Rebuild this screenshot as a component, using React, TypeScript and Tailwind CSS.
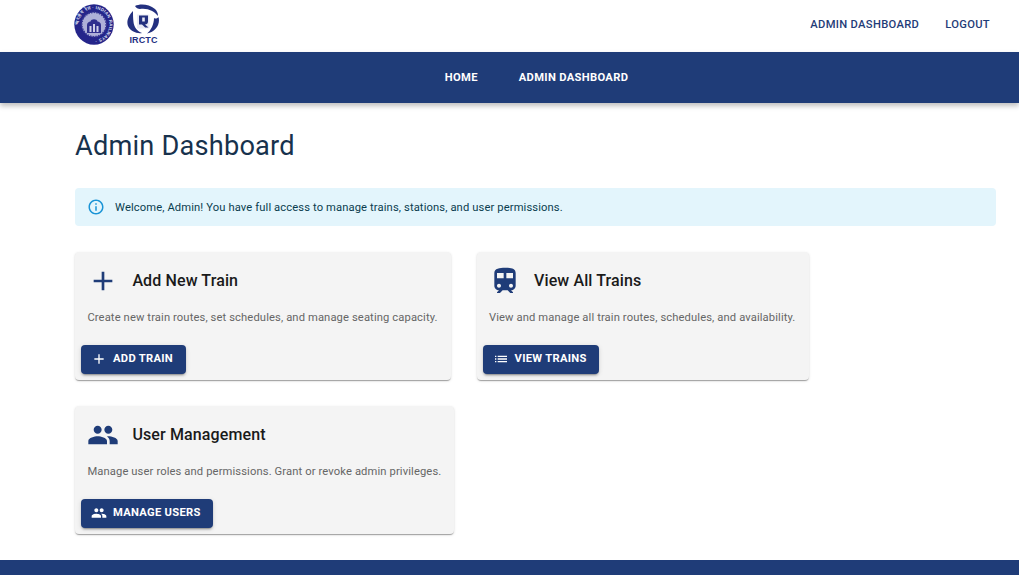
const NAVY = "#1f3c78";

function Icon({ d, className }: { d: string; className: string }) {
  return (
    <svg viewBox="0 0 24 24" fill="currentColor" className={className}>
      <path d={d} />
    </svg>
  );
}

const ADD = "M19 13h-6v6h-2v-6H5v-2h6V5h2v6h6v2z";
const TRAIN = "M12 2c-4 0-8 .5-8 4v9.5C4 17.43 5.57 19 7.5 19L6 20.5v.5h2.23l2-2H14l2 2h2v-.5L16.5 19c1.93 0 3.5-1.57 3.5-3.5V6c0-3.5-3.58-4-8-4zM7.5 17c-.83 0-1.5-.67-1.5-1.5S6.67 14 7.5 14s1.5.67 1.5 1.5S8.33 17 7.5 17zm3.5-7H6V6h5v4zm2 0V6h5v4h-5zm3.5 7c-.83 0-1.5-.67-1.5-1.5s.67-1.5 1.5-1.5 1.5.67 1.5 1.5-.67 1.5-1.5 1.5z";
const PEOPLE = "M16 11c1.66 0 2.99-1.34 2.99-3S17.66 5 16 5c-1.66 0-3 1.34-3 3s1.34 3 3 3zm-8 0c1.66 0 2.99-1.34 2.99-3S9.66 5 8 5C6.34 5 5 6.34 5 8s1.34 3 3 3zm0 2c-2.33 0-7 1.17-7 3.5V19h14v-2.5c0-2.33-4.67-3.5-7-3.5zm8 0c-.29 0-.62.02-.97.05 1.16.84 1.97 1.97 1.97 3.45V19h6v-2.5c0-2.33-4.67-3.5-7-3.5z";
const LIST = "M3 13h2v-2H3v2zm0 4h2v-2H3v2zm0-8h2V7H3v2zm4 4h14v-2H7v2zm0 4h14v-2H7v2zM7 7v2h14V7H7z";
const INFO = "M11 7h2v2h-2zm0 4h2v6h-2zm1-9C6.48 2 2 6.48 2 12s4.48 10 10 10 10-4.48 10-10S17.52 2 12 2zm0 18c-4.41 0-8-3.59-8-8s3.59-8 8-8 8 3.59 8 8-3.59 8-8 8z";

function Emblem() {
  return (
    <svg viewBox="0 0 40 41" className="w-[40px] h-[41px] shrink-0">
      <defs>
        <path id="ring" d="M4.5 20.5a15.5 15.5 0 1 1 31 0a15.5 15.5 0 1 1 -31 0" />
      </defs>
      <ellipse cx="20" cy="20.5" rx="19.7" ry="20.2" fill="#25258a" />
      <text fontSize="4.4" fontWeight="700" fill="#dfe0f2" fontFamily="'Liberation Sans',sans-serif" letterSpacing="0.25">
        <textPath href="#ring">भारतीय रेल · INDIAN RAILWAYS ·</textPath>
      </text>
      <circle cx="20" cy="20.5" r="12.2" fill="#aeb0d8" />
      <circle cx="20" cy="20.5" r="12.2" fill="none" stroke="#3a3a96" strokeWidth="1.6" strokeDasharray="1.5 1.2" />
      <path d="M13 29v-8c0-2 2-3.5 3.5-3.5C17 14.5 23 14.5 23.5 17.5c1.5 0 3.500 1.500 3.500 3.500v8z" fill="#30308e" />
      <path d="M15.500 28v-6h2v6zM19 28v-8h2v8zM22.500 28v-6h2v6z" fill="#cfd0e8" />
    </svg>
  );
}

function IrctcLogo() {
  return (
    <div className="flex flex-col items-center w-[33px] ml-[13px] shrink-0">
      <svg viewBox="0 0 33 31" className="w-[33px] h-[31px]">
        <path d="M8 2C13-.5 22 0 28 5c2 2 3 4 3 7-4-5-10-8-18-7-2 0-4-1-5-3z" fill="#23307f" />
        <path d="M31.500 13c2 7-2.500 15-11.500 16.500 4-3 7-9.500 7-15.500 1.500 1 3.500.500 4.500-1z" fill="#23307f" />
        <path d="M6 7C2 11-1 17 1 22c2 5 9 8 14 7-5-2-8-6-8.500-11C6 14 6 10 6 7z" fill="#23307f" />
        <path d="M10 10.500h12.500v14H10z" fill="#e9eaf4" />
        <path d="M12 11.500h9v6c0 1.800-1.200 3-3 3l3.500 3h-3.300l-3.200-3H12z" fill="#23307f" />
        <path d="M15.200 13.500h2.600v4h-2.600z" fill="#e9eaf4" />
      </svg>
      <span className="text-[9px] leading-[10px] font-bold text-[#23307f] font-['Liberation_Sans',sans-serif] tracking-[0.1px]">IRCTC</span>
    </div>
  );
}

function Card({ icon, title, text, btnIcon, btn, width }: { icon: string; title: string; text: string; btnIcon: string; btn: string; width: string }) {
  return (
    <div className={`${width} h-[128px] bg-[#f4f4f4] rounded shadow-[0_2px_1px_-1px_rgba(0,0,0,0.2),0_1px_1px_0_rgba(0,0,0,0.14),0_1px_3px_0_rgba(0,0,0,0.12)] flex flex-col`}>
      <div className="flex items-center h-[57px] pl-[12px] pt-[1px]">
        <div className="w-[32px] h-[32px] flex items-center justify-center text-[#1f3c78]">
          <Icon d={icon} className="w-[32px] h-[32px]" />
        </div>
        <h2 className="ml-[13.4px] text-[16px] leading-[24px] font-medium text-[#1a1a1a] tracking-[0.12px]">{title}</h2>
      </div>
      <p className="pl-[12.4px] mt-[1px] text-[11.2px] leading-[16px] text-[#666666] tracking-[0.12px] whitespace-nowrap">{text}</p>
      <div className="pl-[6px] mt-[19px]">
        <button className="inline-flex items-center h-[29px] pl-[10px] pr-[12.6px] rounded text-white text-[11.2px] font-bold tracking-[0.3px] bg-[#1f3c78] shadow-[0_3px_1px_-2px_rgba(0,0,0,0.2),0_2px_2px_0_rgba(0,0,0,0.14),0_1px_5px_0_rgba(0,0,0,0.12)]">
          <Icon d={btnIcon} className="w-[16px] h-[16px] mr-[6px] -mt-[1px]" />
          {btn}
        </button>
      </div>
    </div>
  );
}

export default function App() {
  return (
    <div className="h-[575px] w-full overflow-hidden flex flex-col bg-white font-['Roboto',sans-serif]">
      <header className="h-[52px] shrink-0 flex items-center justify-between pl-[74px] pr-[29px]">
        <div className="flex items-center pb-[4px]">
          <Emblem />
          <IrctcLogo />
        </div>
        <nav className="flex items-center gap-[26px] pb-[1px] text-[11.2px] tracking-[0.32px] font-medium text-[#1f3c78]">
          <span>ADMIN DASHBOARD</span>
          <span>LOGOUT</span>
        </nav>
      </header>
      <div className="h-[51px] shrink-0 flex items-center justify-center gap-[41px] pl-[54px] pt-[1px] text-white text-[11.2px] font-bold tracking-[0.32px] shadow-[0_3px_5px_rgba(0,0,0,0.25)]" style={{ backgroundColor: NAVY }}>
        <span>HOME</span>
        <span>ADMIN DASHBOARD</span>
      </div>
      <main className="flex-1 pl-[75px] pr-[23px]">
        <h1 className="mt-[26px] text-[27.2px] leading-[34px] text-[#17324d] tracking-[0.2px]">Admin Dashboard</h1>
        <div className="mt-[25px] h-[38px] flex items-center pl-[12px] rounded bg-[#e3f5fc] text-[#0a3d4f] text-[11.2px] tracking-[0.12px]">
          <Icon d={INFO} className="w-[18px] h-[18px] text-[#1a94d6] mr-[10px]" />
          <span className="pt-[2px]">Welcome, Admin! You have full access to manage trains, stations, and user permissions.</span>
        </div>
        <div className="mt-[26px] flex flex-wrap gap-x-[26px] gap-y-[26px]">
          <Card width="w-[375.6px]" icon={ADD} title="Add New Train" text="Create new train routes, set schedules, and manage seating capacity." btnIcon={ADD} btn="ADD TRAIN" />
          <Card width="w-[332.4px]" icon={TRAIN} title="View All Trains" text="View and manage all train routes, schedules, and availability." btnIcon={LIST} btn="VIEW TRAINS" />
          <Card width="w-[379.2px]" icon={PEOPLE} title="User Management" text="Manage user roles and permissions. Grant or revoke admin privileges." btnIcon={PEOPLE} btn="MANAGE USERS" />
        </div>
      </main>
      <footer className="h-[15px] shrink-0" style={{ backgroundColor: NAVY }} />
    </div>
  );
}
